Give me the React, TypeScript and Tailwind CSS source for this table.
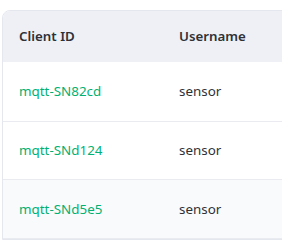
import React from "react";

const rows = [
  { id: "mqtt-SN82cd", user: "sensor", h: "h-[60px]", bg: "bg-white" },
  { id: "mqtt-SNd124", user: "sensor", h: "h-[58px]", bg: "bg-white" },
  { id: "mqtt-SNd5e5", user: "sensor", h: "h-[59px]", bg: "bg-[#f9fafc]" },
];

export default function App() {
  return (
    <div
      className="w-[282px] h-[242px] overflow-hidden bg-white pt-[10px] pl-[2px]"
      style={{ fontFamily: '"Noto Sans", sans-serif' }}
    >
      <div className="w-[320px] border border-[#e4e7ee] rounded-tl-lg overflow-hidden">
        <div className="h-[51px] bg-[#eef0f5] flex items-center text-[13.3px] font-semibold text-[#2f3137]">
          <div className="w-[176px] pl-[16px]">Client ID</div>
          <div>Username</div>
        </div>
        {rows.map((r) => (
          <div
            key={r.id}
            className={`${r.h} border-b border-[#e9ebf0] flex items-center text-[13.4px] ${r.bg}`}
          >
            <div className="w-[176px] pl-[16px] text-[#00b173]">{r.id}</div>
            <div className="text-[#2f3137]">{r.user}</div>
          </div>
        ))}
      </div>
    </div>
  );
}
